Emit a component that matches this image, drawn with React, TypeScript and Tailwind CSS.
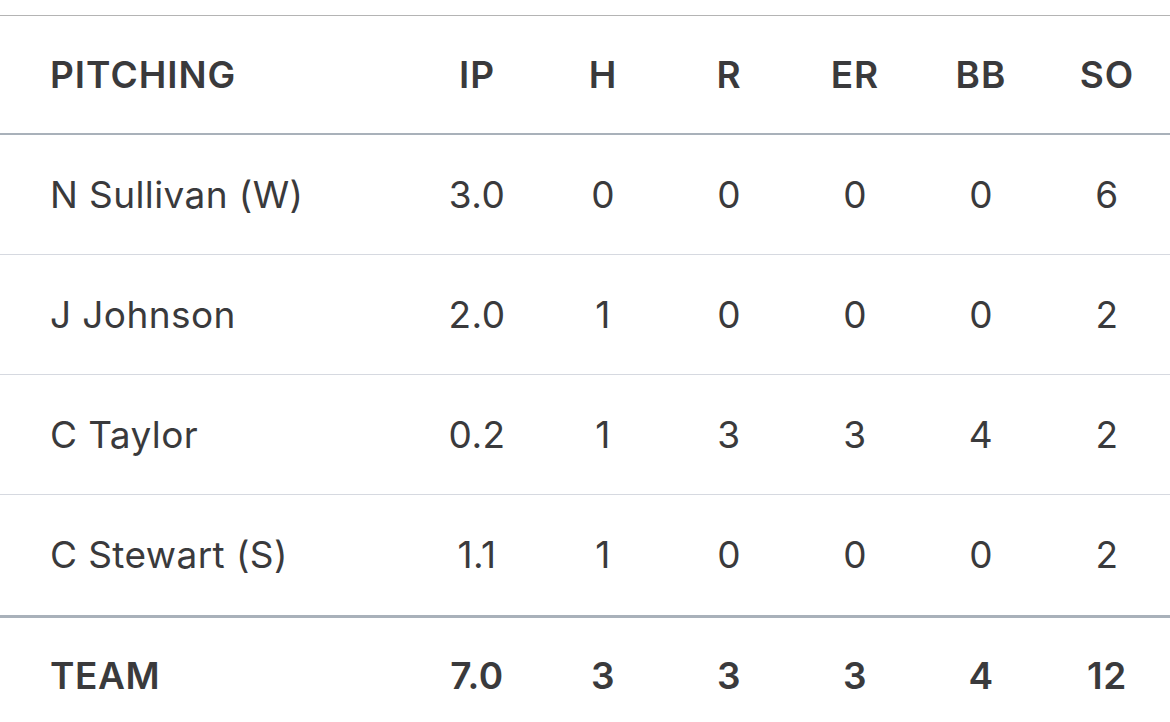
const columns = ['IP', 'H', 'R', 'ER', 'BB', 'SO'];

const pitchers = [
  { name: 'N Sullivan (W)', stats: ['3.0', '0', '0', '0', '0', '6'] },
  { name: 'J Johnson', stats: ['2.0', '1', '0', '0', '0', '2'] },
  { name: 'C Taylor', stats: ['0.2', '1', '3', '3', '4', '2'] },
  { name: 'C Stewart (S)', stats: ['1.1', '1', '0', '0', '0', '2'] },
];

const team = { name: 'TEAM', stats: ['7.0', '3', '3', '3', '4', '12'] };

const grid = 'grid grid-cols-[414px_repeat(6,126px)] items-center';

const App = () => {
  return (
    <div
      className="min-h-screen bg-white pt-[15px] text-[#3a3a3c]"
      style={{ fontFamily: 'Inter, "Liberation Sans", sans-serif' }}
    >
      <div className="w-[1170px] border-t border-[#b4b4b4]">
        {/* header */}
        <div className={`${grid} h-[119px] border-b-2 border-[#a9b1ba] text-[37px] font-semibold tracking-[1px]`}>
          <div className="pl-[50px]">PITCHING</div>
          {columns.map((c) => (
            <div key={c} className="text-center">{c}</div>
          ))}
        </div>

        {/* pitchers */}
        {pitchers.map((p, i) => (
          <div
            key={p.name}
            className={`${grid} text-[37px] tracking-[0.4px] ${
              i === pitchers.length - 1
                ? 'h-[123px] border-b-[3px] border-[#a9b1ba]'
                : 'h-[120px] border-b border-[#d6d9e0]'
            }`}
          >
            <div className="pl-[50px]">{p.name}</div>
            {p.stats.map((s, j) => (
              <div key={j} className="text-center">{s}</div>
            ))}
          </div>
        ))}

        {/* team total */}
        <div className={`${grid} h-[116px] text-[37px] font-semibold tracking-[0.6px]`}>
          <div className="pl-[50px]">{team.name}</div>
          {team.stats.map((s, j) => (
            <div key={j} className="text-center">{s}</div>
          ))}
        </div>
      </div>
    </div>
  );
};

export default App;
